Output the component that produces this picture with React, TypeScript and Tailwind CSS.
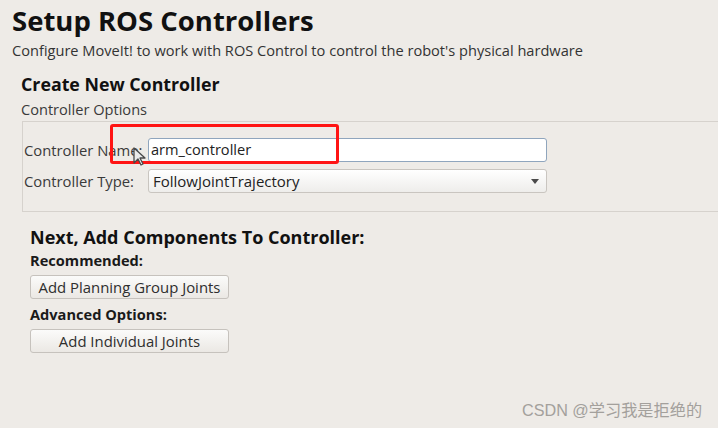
export default function App() {
  return (
    <div className="relative w-[718px] h-[428px] overflow-hidden bg-[#eeebe7] text-[#2e2e2e] font-['Open_Sans',sans-serif]">
      <div className="pl-3 pt-1">
        <h1 className="text-[27.5px] font-bold leading-[34px] text-[#111]">Setup ROS Controllers</h1>
        <p className="mt-[2px] text-[14.6px] leading-[20px] text-[#333]">
          Configure MoveIt! to work with ROS Control to control the robot's physical hardware
        </p>
      </div>

      <div className="pl-[21px] mt-[13px]">
        <h2 className="text-[17.8px] font-bold leading-[22px] text-[#111]">Create New Controller</h2>
        <div className="mt-[4px] text-[14.6px] leading-[20px] text-[#3a3a3a]">Controller Options</div>
      </div>

      <div className="ml-[22px] mt-[2px] h-[91px] border-y border-l border-[#d6d2cd] pl-[1px] pt-[16px] flex flex-col gap-[7px]">
        <div className="flex items-center">
          <span className="w-[124px] text-[14.8px] text-[#3a3a3a]">Controller Name:</span>
          <div className="w-[399px] h-[24px] bg-white border border-[#8fa5bd] rounded-[3px] flex items-center px-[2px] text-[14.6px] text-[#222]">
            arm_controller
          </div>
        </div>
        <div className="flex items-center">
          <span className="w-[124px] text-[14.8px] text-[#3a3a3a]">Controller Type:</span>
          <div className="w-[399px] h-[24px] bg-gradient-to-b from-white to-[#eeedeb] border border-[#c9c5c0] rounded-[3px] flex items-center justify-between pl-[4px] pr-[7px] text-[15px] text-[#222]">
            <span>FollowJointTrajectory</span>
            <svg width="8" height="5" viewBox="0 0 8 5">
              <path d="M0 0h8L4 5z" fill="#4a4a4a" />
            </svg>
          </div>
        </div>
      </div>

      <div className="pl-[30px] mt-[14px]">
        <h3 className="text-[18px] font-bold leading-[22px] text-[#111]">Next, Add Components To Controller:</h3>
        <div className="mt-[3px] text-[14.6px] font-bold leading-[18px] text-[#1a1a1a]">Recommended:</div>
        <button className="mt-[6px] w-[199px] h-[24px] border border-[#c6c2bd] rounded-[3px] bg-gradient-to-b from-[#fbfbfa] to-[#ebe8e4] text-[14.9px] text-[#2e2e2e] block">
          Add Planning Group Joints
        </button>
        <div className="mt-[6px] text-[14.6px] font-bold leading-[18px] text-[#1a1a1a]">Advanced Options:</div>
        <button className="mt-[6px] w-[199px] h-[24px] border border-[#c6c2bd] rounded-[3px] bg-gradient-to-b from-[#fbfbfa] to-[#ebe8e4] text-[14.9px] text-[#2e2e2e] block">
          Add Individual Joints
        </button>
      </div>

      <div className="absolute left-[110px] top-[124px] w-[229px] h-[40px] border-[3px] border-[#ff1414] rounded-[3px]" />

      <svg className="absolute left-[133px] top-[147px]" width="14" height="20" viewBox="0 0 14 20">
        <path d="M1 1v15l4-4 3 6 2-1-3-6h5z" fill="#eaeaea" stroke="#4a4a4a" strokeWidth="1.3" strokeLinejoin="round" />
      </svg>

      <div className="absolute left-[522px] top-[398px] text-[16.2px] leading-[24px] text-[#a3a09c] font-['Liberation_Sans','Noto_Sans_CJK_SC',sans-serif]">
        CSDN @学习我是拒绝的
      </div>
    </div>
  );
}
